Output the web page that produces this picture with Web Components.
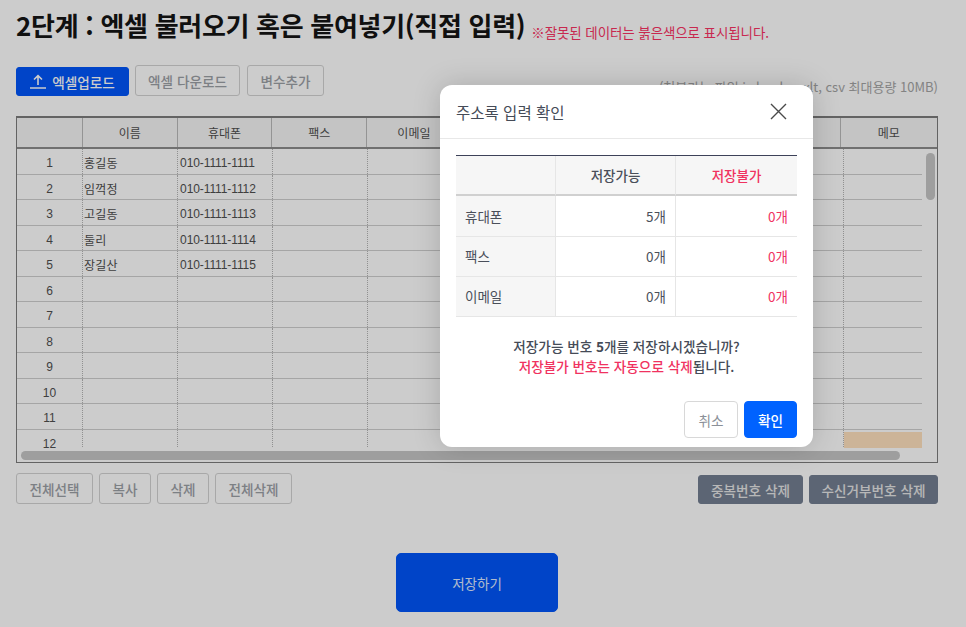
<!DOCTYPE html>
<html lang="ko">
<head>
<meta charset="utf-8">
<title>주소록 입력</title>
<style>
  html, body { margin: 0; height: 100%; background: #fff; }
  body { font-family: "Noto Sans CJK KR", "Noto Sans", sans-serif; overflow: hidden; }
</style>
</head>
<body>
<template id="btn-template">
  <style>
    :host {
      display: inline-flex;
      align-items: center;
      justify-content: center;
      box-sizing: border-box;
      height: 31px;
      gap: 6px;
      padding: 0 8px;
      font-size: 13.6px;
      font-weight: 500;
      color: #9ca0a6;
      background: #fff;
      border: 1px solid #d3d3d3;
      border-radius: 3px;
      white-space: nowrap;
    }
    :host([kind="primary"]) { height: 29px; background: #0056fb; border-color: #0056fb; color: #fff; }
    :host([kind="dark"]) { height: 29px; background: #747f92; border-color: #747f92; color: #e6e6e6; }
    :host([kind="save"]) { width: 162px; height: 59px; background: #0056fb; border-color: #0056fb; color: #dfe9ff; border-radius: 5px; font-weight: 400; font-size: 13.5px; }
    :host([kind="ok"]) { width: 53px; height: 37px; background: #0062ff; border-color: #0062ff; color: #fff; border-radius: 4px; }
    :host([kind="cancel"]) { width: 54px; height: 37px; color: #8b9098; border-color: #d8d8d8; border-radius: 4px; font-weight: 400; }
  </style>
  <slot name="icon"></slot><slot></slot>
</template>

<template id="heading-template">
  <style>
    :host { display: flex; align-items: flex-end; gap: 6px; padding-top: 7px; height: 43px; box-sizing: border-box; }
    h1 { margin: 0; font-size: 26px; line-height: 36px; font-weight: 700; letter-spacing: -0.3px; color: #141414; white-space: nowrap; }
    p { margin: 0 0 2px; font-size: 13.5px; line-height: 18px; color: #fa3263; white-space: nowrap; letter-spacing: -0.1px; }
  </style>
  <h1><slot></slot></h1>
  <p><slot name="note"></slot></p>
</template>

<template id="sheet-template">
  <style>
    :host {
      display: flex;
      flex-direction: column;
      position: relative;
      box-sizing: border-box;
      height: 347px;
      border: 1px solid #7c7c7c;
      border-top-width: 2px;
      background: #fff;
      font-family: "Liberation Sans", "Noto Sans CJK KR", sans-serif;
      font-size: 12px;
      color: #4f4f4f;
    }
    .head {
      display: grid;
      grid-template-columns: 66px repeat(8, 94.7px) 1fr;
      height: 29px;
      flex: none;
      background: #f5f5f5;
      border-bottom: 2px solid #8c8c8c;
    }
    .head div {
      display: flex;
      align-items: center;
      justify-content: center;
      border-right: 1px solid #b9b9b9;
      font-family: "Noto Sans CJK KR", sans-serif;
    }
    .head div:last-child { border-right: 0; }
    .view { flex: none; height: 299px; overflow: hidden; box-sizing: border-box; }
    .rows { width: 905px; }
    .row {
      display: grid;
      grid-template-columns: 66px repeat(8, 95.1px) 1fr;
      height: 25.55px;
      box-sizing: border-box;
      border-bottom: 1px solid #cfcfcf;
    }
    .row div {
      border-right: 1px dotted #b5b5b5;
      padding-left: 2px;
      line-height: 28px;
      white-space: nowrap;
      overflow: hidden;
      letter-spacing: -0.1px;
    }
    .row div:first-child { padding-left: 0; text-align: center; letter-spacing: 0; }
    .row div:nth-child(2) { font-family: "Noto Sans CJK KR", sans-serif; padding-left: 1px; letter-spacing: 0.2px; }
    .row div:last-child { border-right: 0; }
    .row .mark { background: #ffe2be; margin-top: 2px; }
    .track { flex: 1; display: flex; align-items: center; padding-left: 4px; }
    .thumb-x { width: 879px; height: 9px; border-radius: 5px; background: #c6c6c6; }
    .thumb-y { position: absolute; left: 909px; top: 35px; width: 9px; height: 47px; border-radius: 5px; background: #c6c6c6; }
  </style>
  <div class="head" id="head"></div>
  <div class="view"><div class="rows" id="rows"></div></div>
  <div class="track"><div class="thumb-x"></div></div>
  <div class="thumb-y"></div>
</template>

<template id="dialog-template">
  <style>
    :host {
      position: absolute;
      inset: 0;
      background: rgba(0, 0, 0, .2);
      color: #454b57;
    }
    .box {
      position: absolute;
      left: 440px;
      top: 85px;
      width: 373px;
      height: 362px;
      display: flex;
      flex-direction: column;
      background: #fff;
      border-radius: 12px;
      box-shadow: 0 0 28px rgba(0, 0, 0, .17);
    }
    header {
      display: flex;
      align-items: center;
      justify-content: space-between;
      flex: none;
      height: 54px;
      padding: 0 26px 0 16px;
      box-sizing: border-box;
      border-bottom: 1px solid #e8e8e8;
      font-size: 15.5px;
      font-weight: 400;
    }
    .body { flex: 1; display: flex; flex-direction: column; padding: 16px 16px 9px; }
    .msg { margin-top: 19px; text-align: center; font-size: 13.6px; font-weight: 500; line-height: 20px; }
    .foot { margin-top: auto; display: flex; justify-content: flex-end; gap: 6px; }
  </style>
  <div class="box">
    <header>
      <slot name="title"></slot>
      <svg width="17" height="17" viewBox="0 0 17 17" fill="none" stroke="#4a4a4a" stroke-width="1.4"><path d="M1 1 16 16M16 1 1 16"/></svg>
    </header>
    <div class="body">
      <slot name="table"></slot>
      <div class="msg"><slot name="msg"></slot></div>
      <div class="foot"><slot name="foot"></slot></div>
    </div>
  </div>
</template>

<template id="counts-template">
  <style>
    :host {
      display: grid;
      grid-template-columns: 100px 120px 1fr;
      grid-template-rows: repeat(4, 40.25px);
      border-top: 1px solid #3d4259;
      font-size: 13.5px;
      color: #4a4f5a;
    }
    div { display: flex; align-items: center; box-sizing: border-box; border-bottom: 1px solid #e6e6e6; border-right: 1px solid #e6e6e6; }
    div:nth-child(3n+1) { border-right: 0; }
    .th { justify-content: center; background: #f6f6f6; border-bottom: 2px solid #d0d0d0; font-weight: 500; }
    .side { background: #f6f6f6; padding-left: 9px; }
    .num { justify-content: flex-end; padding-right: 9px; }
    .red { color: #f0325f; }
  </style>
  <div class="th"></div><div class="th">저장가능</div><div class="th red">저장불가</div>
  <div class="side">휴대폰</div><div class="num">5개</div><div class="num red">0개</div>
  <div class="side">팩스</div><div class="num">0개</div><div class="num red">0개</div>
  <div class="side">이메일</div><div class="num">0개</div><div class="num red">0개</div>
</template>

<template id="page-template">
  <style>
    :host {
      display: flex;
      flex-direction: column;
      box-sizing: border-box;
      width: 966px;
      height: 627px;
      padding: 0 28px 0 16px;
    }
    .tools { display: flex; align-items: flex-end; gap: 6px; margin-top: 22px; height: 33px; margin-bottom: 18px; padding-bottom: 2px; box-sizing: border-box; }
    .hint { margin-left: auto; font-size: 13px; line-height: 16px; color: #a4a4a4; padding-bottom: 1px; }
    .under { display: flex; align-items: flex-end; gap: 6px; height: 31px; margin-top: 10px; }
    .under .right { margin-left: auto; display: flex; gap: 6px; }
    .save { display: flex; justify-content: center; margin-top: 49px; }
  </style>
  <slot name="heading"></slot>
  <div class="tools"><slot name="tools"></slot><span class="hint"><slot name="hint"></slot></span></div>
  <slot name="sheet"></slot>
  <div class="under"><slot name="under"></slot><div class="right"><slot name="under-right"></slot></div></div>
  <div class="save"><slot name="save"></slot></div>
</template>

<address-page>
  <page-heading slot="heading">2단계 : 엑셀 불러오기 혹은 붙여넣기(직접 입력)<span slot="note">※잘못된 데이터는 붉은색으로 표시됩니다.</span></page-heading>
  <x-btn slot="tools" kind="primary" style="width:113px">
    <svg slot="icon" width="16" height="15" viewBox="0 0 16 15" fill="none" stroke="#fff" stroke-width="1.6"><path d="M8 11V2M4 5.5 8 1.6l4 3.9M0 14h16"/></svg>
    엑셀업로드
  </x-btn>
  <x-btn slot="tools" style="width:105px">엑셀 다운로드</x-btn>
  <x-btn slot="tools" style="width:77px;margin-left:1px">변수추가</x-btn>
  <span slot="hint">(첨부가능 파일 : xls, xlsx, xlt, csv 최대용량 10MB)</span>
  <sheet-grid slot="sheet"></sheet-grid>
  <x-btn slot="under" style="width:77px">전체선택</x-btn>
  <x-btn slot="under" style="width:52px">복사</x-btn>
  <x-btn slot="under" style="width:52px">삭제</x-btn>
  <x-btn slot="under" style="width:77px">전체삭제</x-btn>
  <x-btn slot="under-right" kind="dark" style="width:105px">중복번호 삭제</x-btn>
  <x-btn slot="under-right" kind="dark" style="width:129px">수신거부번호 삭제</x-btn>
  <x-btn slot="save" kind="save">저장하기</x-btn>
</address-page>

<confirm-dialog>
  <span slot="title">주소록 입력 확인</span>
  <count-table slot="table"></count-table>
  <span slot="msg">저장가능 번호 <b>5</b>개를 저장하시겠습니까?<br><span style="color:#f0325f">저장불가 번호는 자동으로 삭제</span>됩니다.</span>
  <x-btn slot="foot" kind="cancel">취소</x-btn>
  <x-btn slot="foot" kind="ok">확인</x-btn>
</confirm-dialog>

<script>
function shadowFrom(el, id) {
  el.attachShadow({ mode: 'open' });
  el.shadowRoot.appendChild(document.getElementById(id).content.cloneNode(true));
}

customElements.define('x-btn', class extends HTMLElement {
  constructor() { super(); shadowFrom(this, 'btn-template'); }
});
customElements.define('page-heading', class extends HTMLElement {
  constructor() { super(); shadowFrom(this, 'heading-template'); }
});
customElements.define('count-table', class extends HTMLElement {
  constructor() { super(); shadowFrom(this, 'counts-template'); }
});
customElements.define('confirm-dialog', class extends HTMLElement {
  constructor() { super(); shadowFrom(this, 'dialog-template'); }
});
customElements.define('address-page', class extends HTMLElement {
  constructor() { super(); shadowFrom(this, 'page-template'); }
});

customElements.define('sheet-grid', class extends HTMLElement {
  constructor() {
    super();
    shadowFrom(this, 'sheet-template');
  }
  connectedCallback() {
    const labels = ['', '이름', '휴대폰', '팩스', '이메일', '', '', '', '', '메모'];
    const people = [
      ['홍길동', '010-1111-1111'],
      ['임꺽정', '010-1111-1112'],
      ['고길동', '010-1111-1113'],
      ['둘리', '010-1111-1114'],
      ['장길산', '010-1111-1115'],
    ];
    const head = this.shadowRoot.getElementById('head');
    labels.forEach(l => {
      const c = document.createElement('div');
      c.textContent = l;
      head.appendChild(c);
    });
    const rows = this.shadowRoot.getElementById('rows');
    for (let i = 0; i < 12; i++) {
      const row = document.createElement('div');
      row.className = 'row';
      const p = people[i] || ['', ''];
      [String(i + 1), p[0], p[1], '', '', '', '', '', '', ''].forEach((t, n) => {
        const c = document.createElement('div');
        c.textContent = t;
        if (i === 11 && n === 9) c.className = 'mark';
        row.appendChild(c);
      });
      rows.appendChild(row);
    }
  }
});
</script>
</body>
</html>
